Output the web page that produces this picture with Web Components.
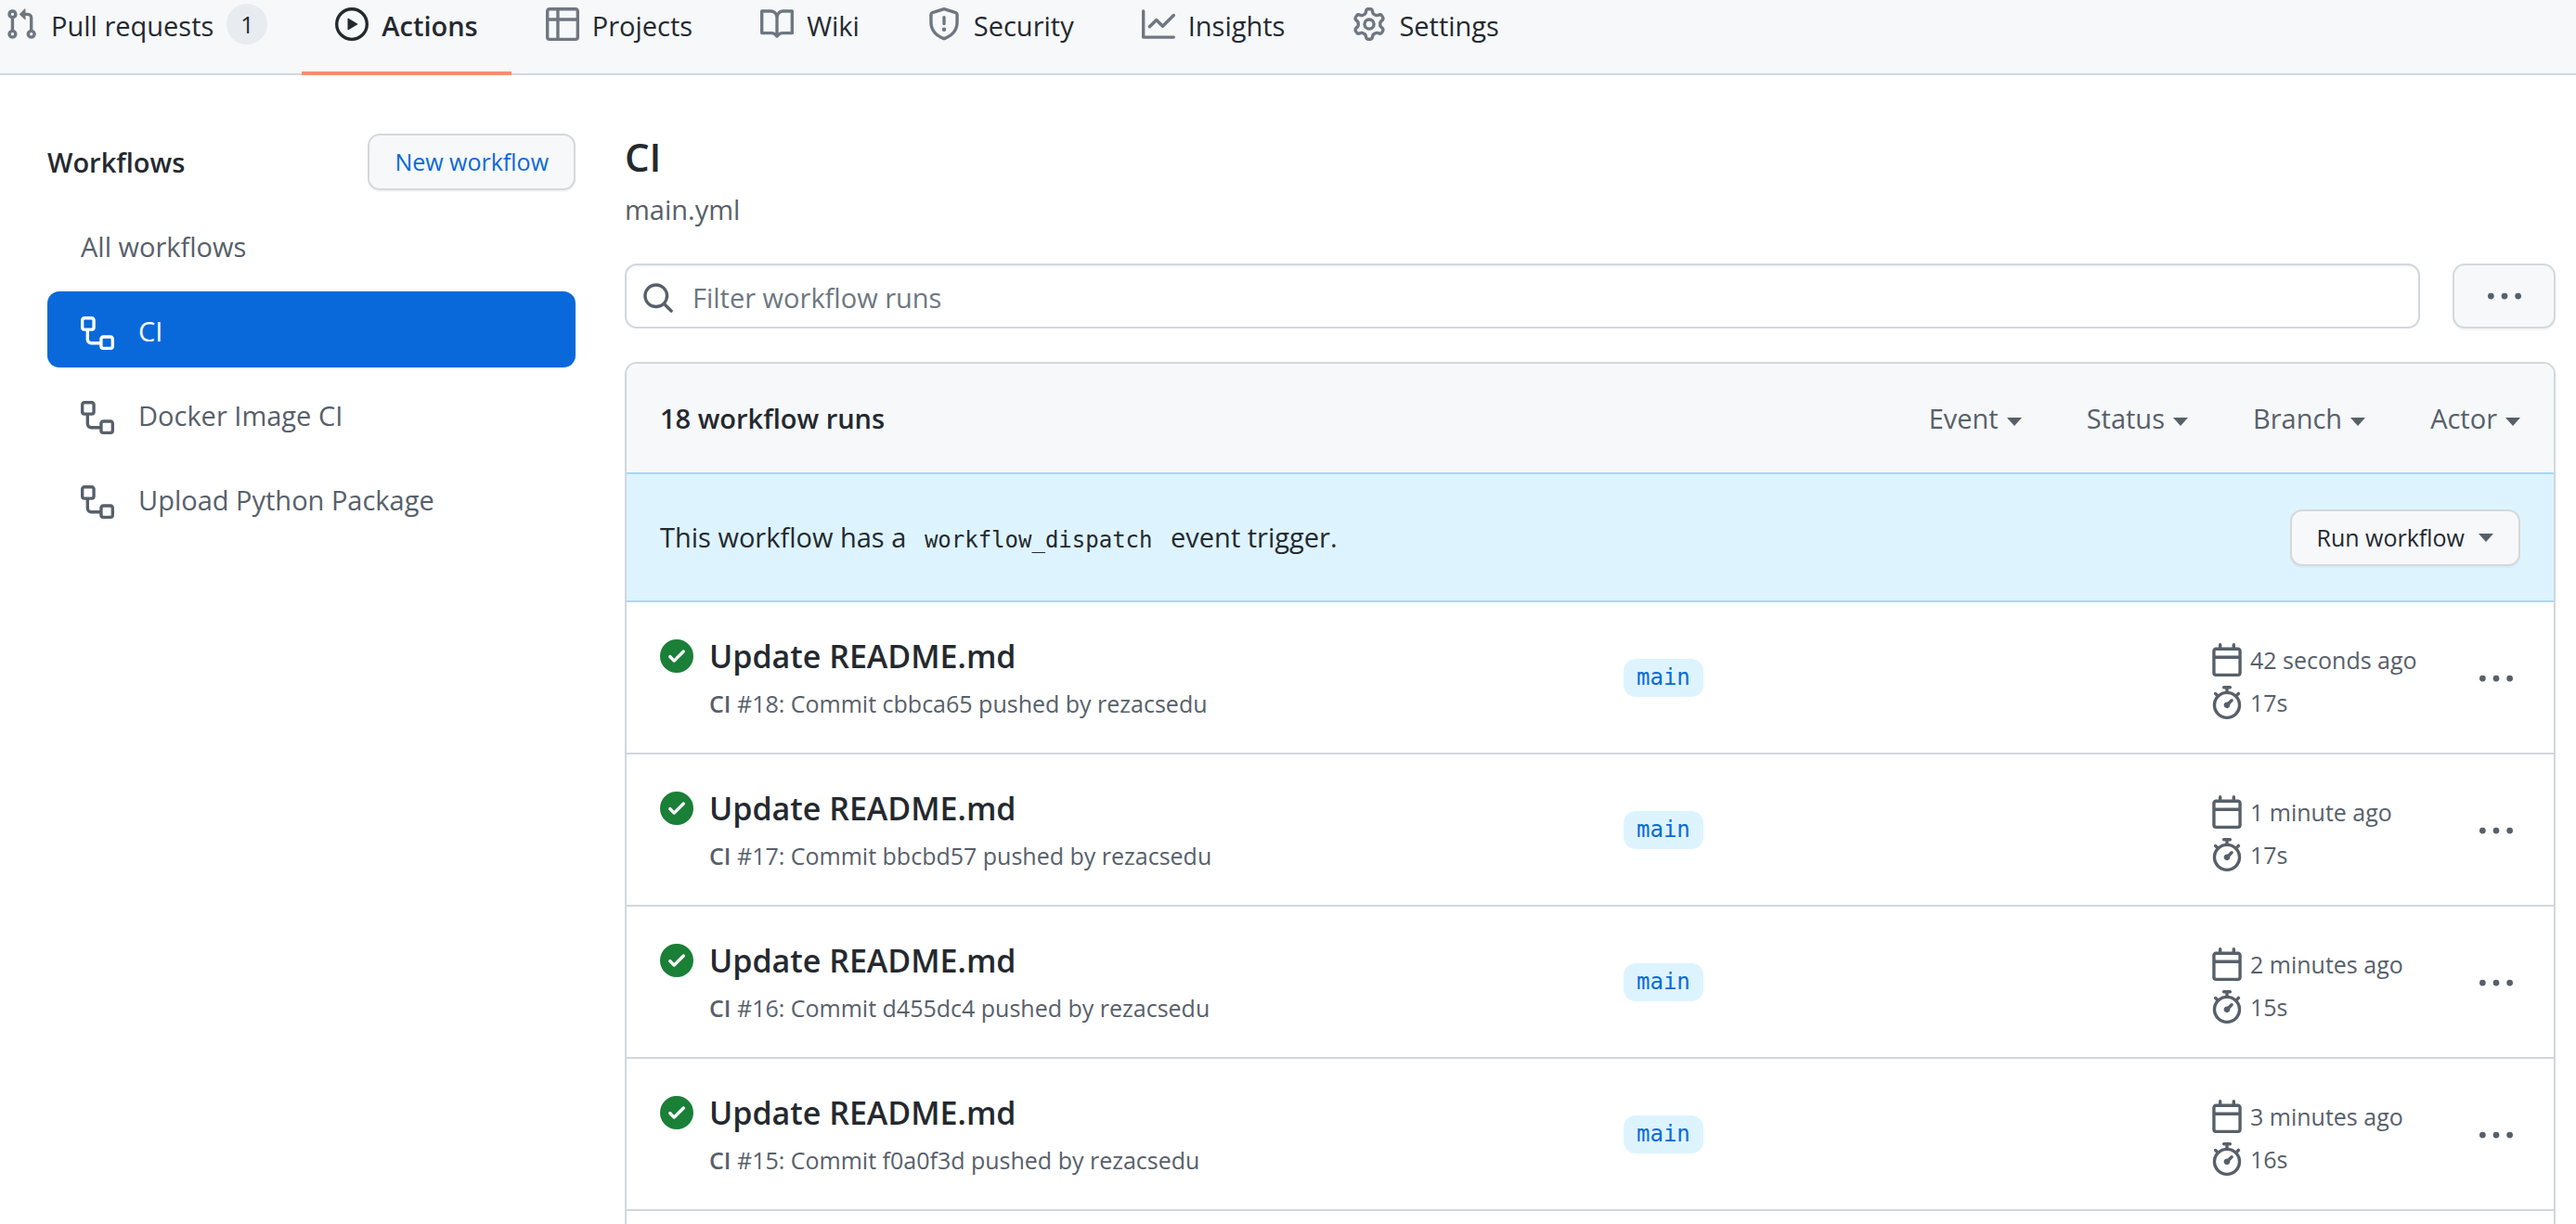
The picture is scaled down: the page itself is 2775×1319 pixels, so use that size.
<!DOCTYPE html>
<html lang="en">
<head>
<meta charset="utf-8">
<meta name="viewport" content="width=device-width, initial-scale=1">
<title>Actions · Workflow runs</title>
<style>
  :root {
    --fg: #24292f;
    --muted: #57606a;
    --subtle: #6e7781;
    --accent: #0969da;
    --border: #d0d7de;
    --canvas: #f6f8fa;
    --info: #ddf4ff;
    --info-border: #a6d8ff;
    --btn-border: #d5d8da;
    --text: 29px;
    --small: 25px;
    --title: 34px;
    --heading: 42px;
    --radius: 13px;
    --mono: "DejaVu Sans Mono", "Liberation Mono", monospace;
  }
  html, body { height: 100%; }
  body {
    margin: 0;
    overflow: hidden;
    background: #fff;
    color: var(--fg);
    font: 400 var(--text)/48px "Open Sans", "Noto Sans", sans-serif;
  }
</style>
</head>
<body>
<actions-page></actions-page>

<script>
const ICONS = {
  pull: 'M7.177 3.073L9.573.677A.25.25 0 0110 .854v4.792a.25.25 0 01-.427.177L7.177 3.427a.25.25 0 010-.354zM3.75 2.5a.75.75 0 100 1.5.75.75 0 000-1.5zm-2.25.75a2.25 2.25 0 113 2.122v5.256a2.251 2.251 0 11-1.5 0V5.372A2.25 2.25 0 011.5 3.25zM11 2.5h-1V4h1a1 1 0 011 1v5.628a2.251 2.251 0 101.5 0V5A2.5 2.5 0 0011 2.5zm1 10.25a.75.75 0 111.5 0 .75.75 0 01-1.5 0zM3.75 12a.75.75 0 100 1.5.75.75 0 000-1.5z',
  play: 'M1.5 8a6.5 6.5 0 1113 0 6.5 6.5 0 01-13 0zM8 0a8 8 0 100 16A8 8 0 008 0zM6.379 5.227A.25.25 0 006 5.442v5.117a.25.25 0 00.379.214l4.264-2.559a.25.25 0 000-.428L6.379 5.227z',
  table: 'M0 1.75C0 .784.784 0 1.75 0h12.5C15.216 0 16 .784 16 1.75v12.5A1.75 1.75 0 0114.25 16H1.75A1.75 1.75 0 010 14.25V1.75zM1.5 6.5v7.75c0 .138.112.25.25.25H5v-8H1.5zM6.5 6.5v8h7.75a.25.25 0 00.25-.25V6.5h-8zM14.5 5V1.75a.25.25 0 00-.25-.25H6.5V5h8zM5 5V1.5H1.75a.25.25 0 00-.25.25V5H5z',
  book: 'M0 1.75A.75.75 0 01.75 1h4.253c1.227 0 2.317.59 3 1.501A3.744 3.744 0 0111.006 1h4.245a.75.75 0 01.75.75v10.5a.75.75 0 01-.75.75h-4.507a2.25 2.25 0 00-1.591.659l-.622.621a.75.75 0 01-1.06 0l-.622-.621A2.25 2.25 0 005.258 13H.75a.75.75 0 01-.75-.75V1.75zm8.755 3a2.25 2.25 0 012.25-2.25H14.5v9h-3.757c-.71 0-1.4.201-1.992.572l.004-7.322zm-1.504 7.324l.004-5.073-.002-2.253A2.25 2.25 0 005.003 2.5H1.5v9h3.757a3.75 3.75 0 011.994.574z',
  shield: 'M7.467.133a1.75 1.75 0 011.066 0l5.25 1.68A1.75 1.75 0 0115 3.48V7c0 1.566-.32 3.182-1.303 4.682-.983 1.498-2.585 2.813-5.032 3.855a1.7 1.7 0 01-1.33 0c-2.447-1.042-4.049-2.357-5.032-3.855C1.32 10.182 1 8.566 1 7V3.48a1.75 1.75 0 011.217-1.667l5.25-1.68zm.61 1.429a.25.25 0 00-.153 0l-5.25 1.68a.25.25 0 00-.174.238V7c0 1.358.275 2.666 1.057 3.86.784 1.194 2.121 2.34 4.366 3.297a.2.2 0 00.154 0c2.245-.956 3.582-2.104 4.366-3.298C13.225 9.666 13.5 8.36 13.5 7V3.48a.25.25 0 00-.174-.237l-5.25-1.68zM8.75 4.75a.75.75 0 00-1.5 0v3a.75.75 0 001.5 0v-3zM9 10.5a1 1 0 11-2 0 1 1 0 012 0z',
  graph: 'M1.5 1.75a.75.75 0 00-1.5 0v12.5c0 .414.336.75.75.75h14.5a.75.75 0 000-1.5H1.5V1.75zm14.28 2.53a.75.75 0 00-1.06-1.06L10 7.94 7.53 5.47a.75.75 0 00-1.06 0L3.22 8.72a.75.75 0 001.06 1.06L7 7.06l2.47 2.47a.75.75 0 001.06 0l5.25-5.25z',
  gear: 'M7.429 1.525a6.593 6.593 0 011.142 0c.036.003.108.036.137.146l.289 1.105c.147.56.55.967.997 1.189.174.086.341.183.501.29.417.278.97.423 1.53.27l1.102-.303c.11-.03.175.016.195.046.219.31.41.641.573.989.014.031.022.11-.059.19l-.815.806c-.411.406-.562.957-.53 1.456a4.588 4.588 0 010 .582c-.032.499.119 1.05.53 1.456l.815.806c.08.08.073.159.059.19a6.494 6.494 0 01-.573.99c-.02.029-.086.074-.195.045l-1.103-.303c-.559-.153-1.112-.008-1.529.27-.16.107-.327.204-.5.29-.449.222-.851.628-.998 1.189l-.289 1.105c-.029.11-.101.143-.137.146a6.613 6.613 0 01-1.142 0c-.036-.003-.108-.037-.137-.146l-.289-1.105c-.147-.56-.55-.967-.997-1.189a4.502 4.502 0 01-.501-.29c-.417-.278-.97-.423-1.53-.27l-1.102.303c-.11.03-.175-.016-.195-.046a6.492 6.492 0 01-.573-.989c-.014-.031-.022-.11.059-.19l.815-.806c.411-.406.562-.957.53-1.456a4.587 4.587 0 010-.582c.032-.499-.119-1.05-.53-1.456l-.815-.806c-.08-.08-.073-.159-.059-.19a6.44 6.44 0 01.573-.99c.02-.029.086-.075.195-.045l1.103.303c.559.153 1.112.008 1.529-.27.16-.107.327-.204.5-.29.449-.222.851-.628.998-1.189l.289-1.105c.029-.11.101-.143.137-.146zM8 0c-.236 0-.47.01-.701.03-.743.065-1.29.615-1.458 1.261l-.29 1.106c-.017.066-.078.158-.211.224a5.994 5.994 0 00-.668.386c-.123.082-.233.09-.3.071L3.27 2.776c-.644-.177-1.392.02-1.82.63a7.977 7.977 0 00-.704 1.217c-.315.675-.111 1.422.363 1.891l.815.806c.05.048.098.147.088.294a6.084 6.084 0 000 .772c.01.147-.038.246-.088.294l-.815.806c-.474.469-.678 1.216-.363 1.891.2.428.436.835.704 1.218.428.609 1.176.806 1.82.63l1.103-.303c.066-.019.176-.011.299.071.213.143.436.272.668.386.133.066.194.158.212.224l.289 1.106c.169.646.715 1.196 1.458 1.26a8.094 8.094 0 001.402 0c.743-.064 1.29-.614 1.458-1.26l.29-1.106c.017-.066.078-.158.211-.224a5.98 5.98 0 00.668-.386c.123-.082.233-.09.3-.071l1.102.302c.644.177 1.392-.02 1.82-.63.268-.382.505-.789.704-1.217.315-.675.111-1.422-.364-1.891l-.814-.806c-.05-.048-.098-.147-.088-.294a6.1 6.1 0 000-.772c-.01-.147.039-.246.088-.294l.814-.806c.475-.469.679-1.216.364-1.891a7.992 7.992 0 00-.704-1.218c-.428-.609-1.176-.806-1.82-.63l-1.103.303c-.066.019-.176.011-.299-.071a5.991 5.991 0 00-.668-.386c-.133-.066-.194-.158-.212-.224L10.16 1.29C9.99.645 9.444.095 8.701.031A8.094 8.094 0 008 0zm1.5 8a1.5 1.5 0 11-3 0 1.5 1.5 0 013 0zM11 8a3 3 0 11-6 0 3 3 0 016 0z',
  workflow: 'M0 1.75C0 .784.784 0 1.75 0h3.5C6.216 0 7 .784 7 1.75v3.5A1.75 1.75 0 015.25 7H4v4a1 1 0 001 1h4v-1.25C9 9.784 9.784 9 10.75 9h3.5c.966 0 1.75.784 1.75 1.75v3.5A1.75 1.75 0 0114.25 16h-3.5A1.75 1.75 0 019 14.25v-.75H5A2.5 2.5 0 012.5 11V7h-.75A1.75 1.75 0 010 5.25v-3.5zm1.75-.25a.25.25 0 00-.25.25v3.5c0 .138.112.25.25.25h3.5a.25.25 0 00.25-.25v-3.5a.25.25 0 00-.25-.25h-3.5zm9 9a.25.25 0 00-.25.25v3.5c0 .138.112.25.25.25h3.5a.25.25 0 00.25-.25v-3.5a.25.25 0 00-.25-.25h-3.5z',
  search: 'M11.5 7a4.499 4.499 0 11-8.998 0A4.499 4.499 0 0111.5 7zm-.82 4.74a6 6 0 111.06-1.06l3.04 3.04a.75.75 0 11-1.06 1.06l-3.04-3.04z',
  check: 'M8 16A8 8 0 108 0a8 8 0 000 16zm3.78-9.72a.75.75 0 00-1.06-1.06L6.75 9.19 5.28 7.72a.75.75 0 00-1.06 1.06l2 2a.75.75 0 001.06 0l4.5-4.5z',
  calendar: 'M4.75 0a.75.75 0 01.75.75V2h5V.75a.75.75 0 011.5 0V2h1.25c.966 0 1.75.784 1.75 1.75v10.5A1.75 1.75 0 0113.25 16H2.75A1.75 1.75 0 011 14.25V3.75C1 2.784 1.784 2 2.75 2H4V.75A.75.75 0 014.75 0zm0 3.5h8.5a.25.25 0 01.25.25V6h-11V3.75a.25.25 0 01.25-.25h2zm-2.25 4v6.75c0 .138.112.25.25.25h10.5a.25.25 0 00.25-.25V7.5h-11z',
  stopwatch: 'M5.75.75A.75.75 0 016.5 0h3a.75.75 0 010 1.5h-.75v1l-.001.041a6.718 6.718 0 013.464 1.435l.007-.006.75-.75a.75.75 0 111.06 1.06l-.75.75-.006.007a6.75 6.75 0 11-10.548 0L2.72 5.03l-.75-.75a.75.75 0 011.06-1.06l.75.75.007.006A6.718 6.718 0 017.25 2.541a.756.756 0 010-.041v-1H6.5a.75.75 0 01-.75-.75zM8 14.5A5.25 5.25 0 108 4a5.25 5.25 0 000 10.5zm.389-6.7l1.33-1.33a.75.75 0 111.061 1.06L9.45 8.861A1.502 1.502 0 018 10.75a1.5 1.5 0 11.389-2.95z',
  kebab: 'M0 8a1.5 1.5 0 113 0 1.5 1.5 0 01-3 0zm6.5 0a1.5 1.5 0 113 0 1.5 1.5 0 01-3 0zm6.5 0a1.5 1.5 0 113 0 1.5 1.5 0 01-3 0z'
};

const BASE = `
  *, *::before { box-sizing: border-box; }
  :host([hidden]) { display: none; }
  a { color: inherit; text-decoration: none; }
  button { font: inherit; color: inherit; margin: 0; padding: 0; border: 0; background: none; cursor: pointer; white-space: nowrap; }
`;

// Registers a custom element whose shadow root is cloned from a template.
// `update` runs on connection and again whenever a watched attribute changes.
function define(name, html, update, watched = []) {
  const template = document.createElement('template');
  template.innerHTML = html.replace('<style>', '<style>' + BASE);
  customElements.define(name, class extends HTMLElement {
    static observedAttributes = watched;
    constructor() {
      super();
      this.attachShadow({ mode: 'open' }).append(template.content.cloneNode(true));
    }
    connectedCallback() {
      if (update && !this.ready) { this.ready = true; update(this, this.shadowRoot); }
    }
    attributeChangedCallback() {
      if (this.ready) update(this, this.shadowRoot);
    }
  });
}

define('ui-icon', `
  <style>
    :host { display: block; flex: none; width: 36px; height: 36px; }
    svg { display: block; width: 100%; height: 100%; fill: currentColor; }
  </style>
  <svg viewBox="0 0 16 16" aria-hidden="true"><path fill-rule="evenodd"/></svg>`,
  (el, root) => root.querySelector('path').setAttribute('d', ICONS[el.getAttribute('name')] || ''),
  ['name']);

define('ui-caret', `
  <style>
    :host { display: block; flex: none; border: 8px solid transparent; border-top: 9px solid var(--muted); border-bottom: 0; }
  </style>`);

define('ui-button', `
  <style>
    :host { display: block; flex: none; }
    button {
      display: flex; align-items: center; justify-content: center; gap: 15px;
      width: 100%; height: 100%; min-height: 61px; padding: 0 27px;
      font-size: var(--small); font-weight: 500; line-height: 45px;
      border: 2px solid var(--btn-border); border-radius: var(--radius);
      background: var(--canvas); box-shadow: 0 2px 0 rgba(27, 31, 36, .04);
    }
  </style>
  <button type="button"><slot></slot></button>`,
  (el, root) => {
    if (el.title) root.querySelector('button').setAttribute('aria-label', el.title);
  });

define('nav-tab', `
  <style>
    :host { display: block; }
    a {
      display: flex; align-items: center; gap: 14px; min-height: 81px;
      padding: 0 36px 25px; line-height: 52px; white-space: nowrap;
      border-bottom: 4px solid transparent;
    }
    ui-icon { color: var(--subtle); }
    .label { height: 48px; }
    :host(:first-child) a { padding-left: 0; }
    :host([current]) a { font-weight: 600; border-color: #fd8c73; }
    :host([current]) ui-icon { color: var(--fg); }
    .count {
      min-width: 44px; height: 44px; border-radius: 22px; text-align: center;
      font-size: var(--small); line-height: 44px; background: #e8ebef;
    }
  </style>
  <a href="#"><ui-icon></ui-icon><span class="label"><slot></slot></span><span class="count"></span></a>`,
  (el, root) => {
    root.querySelector('ui-icon').setAttribute('name', el.getAttribute('icon'));
    if (el.hasAttribute('current')) root.querySelector('a').setAttribute('aria-current', 'page');
    const count = root.querySelector('.count');
    if (el.hasAttribute('count')) count.textContent = el.getAttribute('count');
    else count.remove();
  });

define('repo-nav', `
  <style>
    :host { display: block; background: var(--canvas); box-shadow: inset 0 -2px var(--border); }
    nav { display: flex; gap: 1px; padding-left: 5px; }
  </style>
  <nav aria-label="Repository">
    <slot></slot>
  </nav>`);

define('workflow-link', `
  <style>
    :host { display: block; }
    a {
      display: flex; align-items: center; gap: 26px;
      padding: 19px 36px 15px; border-radius: var(--radius); color: var(--muted);
    }
    ui-icon { margin-top: 4px; }
    :host([current]) a { background: var(--accent); color: #fff; }
  </style>
  <a href="#"><ui-icon name="workflow"></ui-icon><slot></slot></a>`,
  (el, root) => {
    if (el.hasAttribute('plain')) root.querySelector('ui-icon').remove();
    if (el.hasAttribute('current')) root.querySelector('a').setAttribute('aria-current', 'page');
  });

define('workflow-sidebar', `
  <style>
    :host { display: block; flex: 0 0 569px; }
    header { display: flex; align-items: center; justify-content: space-between; margin-bottom: 18px; }
    h2 { margin: 0; font-size: var(--text); font-weight: 600; }
    ui-button { color: var(--accent); }
    nav { display: flex; flex-direction: column; gap: 9px; }
  </style>
  <header><h2>Workflows</h2><ui-button>New workflow</ui-button></header>
  <nav aria-label="Workflows"><slot></slot></nav>`);

define('run-search', `
  <style>
    :host { display: flex; gap: 35px; height: 70px; }
    label {
      flex: 1; display: flex; align-items: center; gap: 19px; padding: 4px 16px 0;
      border: 2px solid var(--border); border-radius: var(--radius);
      box-shadow: inset 0 2px 0 rgba(208, 215, 222, .2); color: var(--muted);
    }
    input {
      flex: 1; min-width: 0; padding: 0; border: 0; outline: 0; background: none;
      font: inherit; color: var(--fg);
    }
    input::placeholder { color: var(--subtle); opacity: 1; }
    ui-button { flex: 0 0 111px; color: var(--muted); }
  </style>
  <label><ui-icon name="search"></ui-icon><input type="text" placeholder="Filter workflow runs" aria-label="Filter workflow runs"></label>
  <ui-button title="Show workflow options"><ui-icon name="kebab"></ui-icon></ui-button>`);

define('filter-menu', `
  <style>
    :host { display: block; }
    button { display: flex; align-items: center; gap: 9px; color: var(--muted); }
    ui-caret { margin-top: 8px; }
  </style>
  <button type="button" aria-haspopup="true"><slot></slot><ui-caret></ui-caret></button>`);

define('workflow-run', `
  <style>
    :host {
      display: grid; grid-template-columns: 1038fr 632fr 290fr 36px;
      padding: 32px 44px 31px 36px; border-bottom: 2px solid var(--border);
      font-size: var(--small); color: var(--muted);
    }
    .summary { display: flex; gap: 17px; padding-top: 4px; }
    .summary ui-icon { margin-top: 4px; color: #1a7f37; }
    h3 { margin: 0 0 8px; font-size: var(--title); font-weight: 600; line-height: 45px; color: var(--fg); }
    p { margin: 0; line-height: 40px; }
    b { font-weight: 600; }
    .branch {
      align-self: center; justify-self: start; padding: 0 14px; border-radius: var(--radius);
      font: 24px/41px var(--mono); color: var(--accent); background: var(--info);
    }
    .meta { padding-top: 7px; line-height: 46px; }
    .meta div { display: flex; align-items: center; gap: 7px; white-space: nowrap; }
    button { align-self: center; }
  </style>
  <div class="summary">
    <ui-icon name="check"></ui-icon>
    <div>
      <h3><a href="#"><slot></slot></a></h3>
      <p><b>CI</b> <span class="text"></span></p>
    </div>
  </div>
  <a class="branch" href="#">main</a>
  <div class="meta">
    <div><ui-icon name="calendar"></ui-icon><span class="ago"></span></div>
    <div><ui-icon name="stopwatch"></ui-icon><span class="took"></span></div>
  </div>
  <button type="button" aria-label="Run options"><ui-icon name="kebab"></ui-icon></button>`,
  (el, root) => {
    const get = name => el.getAttribute(name);
    root.querySelector('.text').textContent = `#${get('number')}: Commit ${get('commit')} pushed by ${get('actor')}`;
    root.querySelector('.ago').textContent = get('ago');
    root.querySelector('.took').textContent = get('took');
  });

define('run-list', `
  <style>
    :host {
      display: block; flex: 1; min-height: 0; overflow: hidden;
      border: 2px solid var(--border); border-bottom: 0;
      border-radius: var(--radius) var(--radius) 0 0;
    }
    header {
      display: flex; align-items: center; justify-content: space-between;
      min-height: 117px; padding: 0 36px; background: var(--canvas);
    }
    h2 { margin: 0; font-size: var(--text); font-weight: 600; }
    .filters { display: flex; gap: 70px; }
    .dispatch {
      display: flex; align-items: center; justify-content: space-between;
      min-height: 140px; padding: 0 36px; background: var(--info);
      border: 2px solid var(--info-border); border-width: 2px 0;
    }
    code { padding: 0 12px; font: 24px var(--mono); }
  </style>
  <header>
    <h2>18 workflow runs</h2>
    <div class="filters">
      <filter-menu>Event</filter-menu>
      <filter-menu>Status</filter-menu>
      <filter-menu>Branch</filter-menu>
      <filter-menu>Actor</filter-menu>
    </div>
  </header>
  <div class="dispatch">
    <span>This workflow has a <code>workflow_dispatch</code> event trigger.</span>
    <ui-button>Run workflow <ui-caret></ui-caret></ui-button>
  </div>
  <slot></slot>`);

define('actions-page', `
  <style>
    :host { display: flex; flex-direction: column; height: 100vh; }
    .layout { flex: 1; min-height: 0; display: flex; gap: 53px; padding: 63px 22px 0 51px; }
    main { flex: 1; min-width: 0; display: flex; flex-direction: column; }
    h1 { margin: 0 0 8px; font-size: var(--heading); font-weight: 600; line-height: 50px; }
    .file { color: var(--muted); margin-bottom: 34px; }
    run-search { margin-bottom: 36px; }
  </style>
  <repo-nav>
    <nav-tab icon="pull" count="1">Pull requests</nav-tab>
    <nav-tab icon="play" current>Actions</nav-tab>
    <nav-tab icon="table">Projects</nav-tab>
    <nav-tab icon="book">Wiki</nav-tab>
    <nav-tab icon="shield">Security</nav-tab>
    <nav-tab icon="graph">Insights</nav-tab>
    <nav-tab icon="gear">Settings</nav-tab>
  </repo-nav>
  <div class="layout">
    <workflow-sidebar>
      <workflow-link plain>All workflows</workflow-link>
      <workflow-link current>CI</workflow-link>
      <workflow-link>Docker Image CI</workflow-link>
      <workflow-link>Upload Python Package</workflow-link>
    </workflow-sidebar>
    <main>
      <h1>CI</h1>
      <a class="file" href="#">main.yml</a>
      <run-search></run-search>
      <run-list>
        <workflow-run number="18" commit="cbbca65" actor="rezacsedu" ago="42 seconds ago" took="17s">Update README.md</workflow-run>
        <workflow-run number="17" commit="bbcbd57" actor="rezacsedu" ago="1 minute ago" took="17s">Update README.md</workflow-run>
        <workflow-run number="16" commit="d455dc4" actor="rezacsedu" ago="2 minutes ago" took="15s">Update README.md</workflow-run>
        <workflow-run number="15" commit="f0a0f3d" actor="rezacsedu" ago="3 minutes ago" took="16s">Update README.md</workflow-run>
      </run-list>
    </main>
  </div>`);
</script>
</body>
</html>
